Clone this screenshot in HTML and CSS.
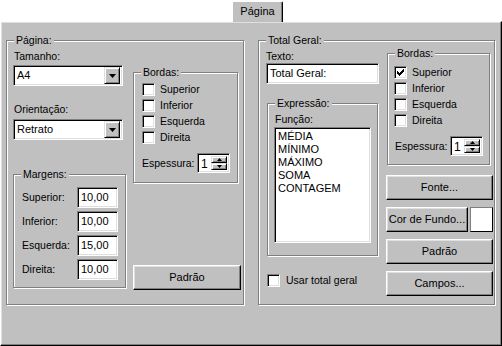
FILE: index.html
```html
<!DOCTYPE html>
<html lang="pt">
<head>
<meta charset="utf-8">
<link rel="stylesheet" href="styles.css">
</head>
<body>
<div class="tabs"><div class="tab">Página</div></div>
<div class="panel">
  <div class="group g-page">
    <span class="cap">Página:</span>
    <div class="col col-left">
      <div class="lbl l-tam">Tamanho:</div>
      <div class="field combo c-tam"><span class="val">A4</span><span class="dd"><svg width="7" height="4" viewBox="0 0 7 4"><path d="M0 0H7L3.5 4Z" fill="#000"/></svg></span></div>
      <div class="lbl l-ori">Orientação:</div>
      <div class="field combo c-ori"><span class="val">Retrato</span><span class="dd"><svg width="7" height="4" viewBox="0 0 7 4"><path d="M0 0H7L3.5 4Z" fill="#000"/></svg></span></div>
      <div class="group g-marg">
        <span class="cap">Margens:</span>
        <div class="mrow"><span class="mlbl">Superior:</span><span class="field edit num">10,00</span></div>
        <div class="mrow"><span class="mlbl">Inferior:</span><span class="field edit num">10,00</span></div>
        <div class="mrow"><span class="mlbl">Esquerda:</span><span class="field edit num">15,00</span></div>
        <div class="mrow"><span class="mlbl">Direita:</span><span class="field edit num">10,00</span></div>
      </div>
    </div>
    <div class="col col-right">
      <div class="group g-bord1">
        <span class="cap">Bordas:</span>
        <div class="chk"><span class="field cb"></span><span>Superior</span></div>
        <div class="chk"><span class="field cb"></span><span>Inferior</span></div>
        <div class="chk"><span class="field cb"></span><span>Esquerda</span></div>
        <div class="chk"><span class="field cb"></span><span>Direita</span></div>
        <div class="esp"><span class="esp-lbl">Espessura:</span><span class="field spin"><span class="val">1</span><span class="ud"><span class="udb"><svg width="5" height="3" viewBox="0 0 5 3"><path d="M0 3H5L2.5 0Z" fill="#000"/></svg></span><span class="udb"><svg width="5" height="3" viewBox="0 0 5 3"><path d="M0 0H5L2.5 3Z" fill="#000"/></svg></span></span></span></div>
      </div>
      <div class="btn b-pad1">Padrão</div>
    </div>
  </div>
  <div class="group g-total">
    <span class="cap">Total Geral:</span>
    <div class="col col-tl">
      <div class="lbl l-texto">Texto:</div>
      <div class="field edit t-texto">Total Geral:</div>
      <div class="group g-expr">
        <span class="cap">Expressão:</span>
        <div class="lbl l-func">Função:</div>
        <div class="field list">
          <div>MÉDIA</div>
          <div>MÍNIMO</div>
          <div>MÁXIMO</div>
          <div>SOMA</div>
          <div>CONTAGEM</div>
        </div>
      </div>
      <div class="chk usar"><span class="field cb"></span><span>Usar total geral</span></div>
    </div>
    <div class="col col-tr">
      <div class="group g-bord2">
        <span class="cap">Bordas:</span>
        <div class="chk"><span class="field cb"><svg width="7" height="7" viewBox="0 0 7 7" shape-rendering="crispEdges"><path d="M6 0h1v3h-1v1h-1v1h-1v1h-1v1h-1v-1h-1v-1h-1v-3h1v1h1v1h1v-1h1v-1h1z" fill="#000"/></svg></span><span>Superior</span></div>
        <div class="chk"><span class="field cb"></span><span>Inferior</span></div>
        <div class="chk"><span class="field cb"></span><span>Esquerda</span></div>
        <div class="chk"><span class="field cb"></span><span>Direita</span></div>
        <div class="esp"><span class="esp-lbl">Espessura:</span><span class="field spin"><span class="val">1</span><span class="ud"><span class="udb"><svg width="5" height="3" viewBox="0 0 5 3"><path d="M0 3H5L2.5 0Z" fill="#000"/></svg></span><span class="udb"><svg width="5" height="3" viewBox="0 0 5 3"><path d="M0 0H5L2.5 3Z" fill="#000"/></svg></span></span></span></div>
      </div>
      <div class="btn b-fonte">Fonte...</div>
      <div class="cor-row"><div class="btn b-cor">Cor de Fundo...</div><div class="swatch"></div></div>
      <div class="btn b-pad2">Padrão</div>
      <div class="btn b-campos">Campos...</div>
    </div>
  </div>
</div>
</body>
</html>
```
FILE: styles.css
```css
* { box-sizing: border-box; }
html, body { margin: 0; padding: 0; }
body {
  width: 502px;
  height: 346px;
  overflow: hidden;
  background: #fff;
  font-family: "Liberation Sans", Arial, sans-serif;
  font-size: 10.5px;
  line-height: 13px;
  color: #000;
}
svg { display: block; }

.tabs { height: 21px; display: flex; padding-left: 232px; }
.tab {
  position: relative;
  z-index: 1;
  width: 51px;
  height: 21px;
  margin-top: 1px;
  margin-bottom: -1px;
  background: #c0c0c0;
  border-top: 1px solid #fff;
  border-left: 1px solid #fff;
  border-right: 1px solid #000;
  border-radius: 2px 2px 0 0;
  box-shadow: inset -1px 0 0 #808080;
  text-align: center;
  font-size: 11px;
  line-height: 18px;
}

.panel {
  height: 325px;
  display: flex;
  align-items: flex-start;
  padding: 18px 0 0 5px;
  background: #c0c0c0;
  border-style: solid;
  border-width: 1px;
  border-color: #fff #000 #000 #fff;
  box-shadow: inset -1px -1px 0 #808080, inset 1px 1px 0 #dfdfdf;
}

.group {
  position: relative;
  border: 1px solid #808080;
  box-shadow: 1px 1px 0 #fff, inset 1px 1px 0 #fff;
}
.cap {
  position: absolute;
  top: -7px;
  left: 7px;
  padding: 0 2px;
  background: #c0c0c0;
  line-height: 13px;
  white-space: nowrap;
}

.col { display: flex; flex-direction: column; align-items: flex-start; }

/* Página group */
.g-page { width: 238px; height: 265px; display: flex; align-items: flex-start; padding-left: 6px; }
.col-left { width: 113px; }
.col-right { margin-left: 7px; }
.lbl { line-height: 13px; white-space: nowrap; }
.l-tam { margin-top: 9px; padding-left: 1px; }
.c-tam { margin-top: 2px; }
.l-ori { margin-top: 17px; padding-left: 1px; }
.c-ori { margin-top: 3px; }

.field {
  background: #fff;
  border: 1px solid;
  border-color: #808080 #fff #fff #808080;
  box-shadow: inset 1px 1px 0 #000, inset -1px -1px 0 #dfdfdf;
}
.combo {
  width: 110px;
  height: 21px;
  display: flex;
  align-items: center;
  padding: 2px;
}
.combo .val { flex: 1; padding-left: 1px; font-size: 11px; }
.dd {
  width: 16px;
  height: 17px;
  display: flex;
  align-items: center;
  justify-content: center;
  background: #c0c0c0;
  border: 1px solid;
  border-color: #dfdfdf #000 #000 #dfdfdf;
  box-shadow: inset 1px 1px 0 #fff, inset -1px -1px 0 #808080;
}

.g-marg { margin-top: 34px; width: 113px; height: 114px; padding: 12px 0 0 8px; display: flex; flex-direction: column; gap: 3px; }
.mrow { display: flex; align-items: center; height: 21px; }
.mlbl { width: 55px; }
.edit { height: 21px; padding: 3px 0 0 3px; line-height: 13px; font-size: 11px; white-space: nowrap; overflow: hidden; }
.num { width: 41px; }

.g-bord1 { margin-top: 31px; width: 105px; height: 111px; padding: 10px 0 0 8px; display: flex; flex-direction: column; gap: 3px; }
.chk { display: flex; align-items: center; height: 13px; gap: 5px; white-space: nowrap; }
.cb { width: 13px; height: 13px; display: flex; align-items: center; justify-content: center; flex: none; }
.esp { display: flex; align-items: center; margin-top: 6px; }
.g-bord1 .esp-lbl { width: 55px; }
.spin { width: 33px; height: 20px; display: flex; padding: 2px; }
.spin .val { flex: 1; padding: 1px 0 0 1px; line-height: 14px; font-size: 12px; }
.ud { width: 16px; display: flex; flex-direction: column; }
.udb {
  flex: 1;
  display: flex;
  align-items: center;
  justify-content: center;
  background: #c0c0c0;
  border: 1px solid;
  border-color: #dfdfdf #000 #000 #dfdfdf;
  box-shadow: inset 1px 1px 0 #fff, inset -1px -1px 0 #808080;
}

.btn {
  height: 25px;
  display: flex;
  align-items: center;
  justify-content: center;
  background: #c0c0c0;
  border: 1px solid;
  border-color: #fff #000 #000 #fff;
  box-shadow: inset -1px -1px 0 #808080, inset 1px 1px 0 #dfdfdf;
  white-space: nowrap;
  font-size: 11px;
}
.b-pad1 { margin-top: 82px; width: 108px; }

/* Total Geral group */
.g-total { margin-left: 14px; width: 237px; height: 265px; display: flex; align-items: flex-start; padding-left: 7px; }
.col-tl { width: 113px; }
.l-texto { margin-top: 9px; }
.t-texto { width: 113px; }
.g-expr { margin: 19px 0 0 1px; width: 111px; height: 153px; padding: 0 0 0 6px; }
.l-func { margin-top: 9px; padding-left: 1px; }
.list { margin-top: 1px; width: 97px; height: 116px; padding: 2px 0 0 3px; line-height: 13px; font-size: 11px; }
.usar { margin: 18px 0 0 1px; gap: 6px; }

.col-tr { margin-left: 7px; }
.g-bord2 { margin: 12px 0 0 1px; width: 103px; height: 112px; padding: 12px 0 0 6px; display: flex; flex-direction: column; gap: 3px; }
.g-bord2 .esp { margin-top: 6px; }
.g-bord2 .esp-lbl { width: 56px; padding-left: 1px; }
.b-fonte { margin-top: 10px; width: 107px; }
.cor-row { margin-top: 7px; display: flex; gap: 2px; }
.b-cor { width: 82px; }
.swatch { width: 23px; height: 25px; background: #fff; border: 1px solid; border-color: #808080 #000 #000 #808080; }
.b-pad2 { margin-top: 7px; width: 107px; }
.b-campos { margin-top: 7px; width: 107px; }
```
